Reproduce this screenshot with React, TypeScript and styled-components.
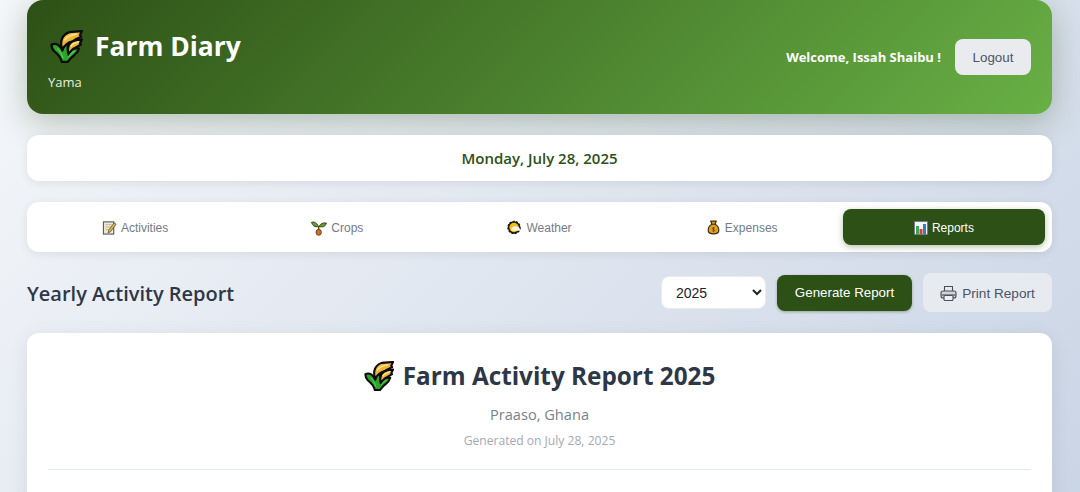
import React from "react";
import styled, { createGlobalStyle } from "styled-components";

const GlobalStyle = createGlobalStyle`
  html, body {
    margin: 0;
    padding: 0;
    height: 100%;
    overflow: hidden;
  }
  body {
    background: linear-gradient(135deg, #f5f7fa 0%, #c3cfe2 100%) no-repeat;
    background-size: 1080px 760px;
    background-color: #c3cfe2;
    font-family: "Open Sans", "Noto Sans", sans-serif;
  }
  #root {
    height: 492px;
    overflow: hidden;
  }
`;

const Page = styled.div`
  height: 492px;
  box-sizing: border-box;
  padding: 0 28px 0 27px;
  display: flex;
  flex-direction: column;
`;

const Header = styled.header`
  height: 114px;
  flex: none;
  box-sizing: border-box;
  padding: 0 21px;
  border-radius: 16px;
  background: linear-gradient(135deg, #2d5016 0%, #68b045 100%);
  box-shadow: 0 8px 32px rgba(45, 80, 22, 0.3);
  display: flex;
  align-items: center;
  justify-content: space-between;
  color: #fff;
`;

const Brand = styled.div`
  display: flex;
  flex-direction: column;
  gap: 9px;
  padding-top: 5px;
`;

const BrandTitle = styled.h1`
  margin: 0;
  display: flex;
  align-items: center;
  gap: 12px;
  font-size: 26.4px;
  line-height: 36px;
  font-weight: 700;
  padding-left: 2px;
`;

const BrandPlace = styled.div`
  font-size: 13px;
  line-height: 18px;
  font-weight: 500;
  color: #e6ede1;
`;

const UserArea = styled.div`
  display: flex;
  align-items: center;
  gap: 14px;
`;

const Welcome = styled.span`
  font-size: 13px;
  font-weight: 700;
`;

const LogoutButton = styled.button`
  width: 76px;
  height: 36px;
  border: 0;
  border-radius: 8px;
  background: #e9ebef;
  color: #4a5568;
  font-family: "Liberation Sans", Arial, sans-serif;
  font-size: 13.33px;
  padding: 0;
`;

const DateCard = styled.div`
  margin-top: 21px;
  height: 46px;
  flex: none;
  border-radius: 12px;
  background: #fff;
  box-shadow: 0 2px 10px rgba(0, 0, 0, 0.08);
  display: flex;
  align-items: center;
  justify-content: center;
  color: #2d5016;
  font-size: 15px;
  font-weight: 600;
`;

const Tabs = styled.nav`
  margin-top: 21px;
  height: 50px;
  flex: none;
  box-sizing: border-box;
  padding: 7px;
  border-radius: 12px;
  background: #fff;
  box-shadow: 0 2px 10px rgba(0, 0, 0, 0.08);
  display: flex;
`;

const Tab = styled.button<{ $active?: boolean }>`
  flex: 1;
  height: 36px;
  border: 0;
  padding: 1px 0 0;
  border-radius: 8px;
  display: flex;
  align-items: center;
  justify-content: center;
  gap: 4px;
  background: ${(p) => (p.$active ? "#2d5016" : "transparent")};
  color: ${(p) => (p.$active ? "#fff" : "#747a86")};
  box-shadow: ${(p) => (p.$active ? "0 2px 6px rgba(45, 80, 22, 0.35)" : "none")};
  font-family: "Liberation Sans", Arial, sans-serif;
  font-size: 12px;
`;

const Toolbar = styled.div`
  margin-top: 20px;
  height: 41px;
  flex: none;
  display: flex;
  align-items: center;
  justify-content: space-between;
`;

const SectionTitle = styled.h2`
  margin: 2px 0 0;
  font-size: 20px;
  font-weight: 600;
  color: #2d3748;
`;

const Controls = styled.div`
  display: flex;
  align-items: center;
  gap: 11px;
`;

const YearSelect = styled.select`
  width: 105px;
  height: 33px;
  box-sizing: border-box;
  border: 1px solid #e8ecf1;
  border-radius: 8px;
  background: #fff;
  color: #222;
  font-family: "Liberation Sans", Arial, sans-serif;
  font-size: 14px;
  padding: 0 0 0 10px;
`;

const PrimaryButton = styled.button`
  width: 135px;
  height: 36px;
  border: 0;
  border-radius: 8px;
  background: #2d5016;
  color: #fff;
  box-shadow: 0 1px 3px rgba(45, 80, 22, 0.4);
  font-family: "Liberation Sans", Arial, sans-serif;
  font-size: 13.33px;
  padding: 0;
`;

const SecondaryButton = styled.button`
  width: 129px;
  height: 39px;
  border: 0;
  border-radius: 8px;
  background: #e7eaef;
  color: #4a5568;
  display: flex;
  align-items: center;
  justify-content: center;
  gap: 5px;
  font-family: "Liberation Sans", Arial, sans-serif;
  font-size: 13.6px;
  padding: 1px 0 0;
`;

const ReportCard = styled.section`
  margin-top: 20px;
  flex: none;
  height: 300px;
  box-sizing: border-box;
  padding: 22px 21px 0;
  border-radius: 12px;
  background: #fff;
  box-shadow: 0 4px 20px rgba(0, 0, 0, 0.08);
`;

const ReportHeader = styled.div`
  display: flex;
  flex-direction: column;
  align-items: center;
  padding-bottom: 20px;
  border-bottom: 1px solid #e2e8f0;
`;

const ReportTitle = styled.h3`
  margin: 0;
  display: flex;
  align-items: center;
  gap: 9px;
  font-size: 24.3px;
  line-height: 42px;
  font-weight: 700;
  color: #2d3748;
`;

const ReportPlace = styled.div`
  margin-top: 7px;
  font-size: 14.6px;
  line-height: 20px;
  color: #7a818c;
`;

const ReportDate = styled.div`
  margin-top: 8px;
  font-size: 12.1px;
  line-height: 17px;
  color: #a3a9b3;
`;

const SheafIcon = ({ size }: { size: number }) => (
  <svg width={size} height={size} viewBox="0 0 32 32" aria-hidden="true">
    <g stroke="#0b0b0b" strokeWidth="2.2" strokeLinejoin="round" strokeLinecap="round">
      <path
        d="M1.500 14c4.500-2 8.500 1 10.500 6l1-6h4l.5 8c1.500-3 5.500-4.500 10.500-4-1 4.500-5 6.500-7 8.500-2 2-3 3.500-4 4.500h-5.500c-1-5-5-8.500-7.500-10.500-2-2-2.500-4.500-2.500-6.500z"
        fill="#2ea32a"
      />
      <path
        d="M12 19C9 11 12 4 19 2l12-1-2 4 1 1.500-5 2.500-3 2c-5 1-8 4-10 8z"
        fill="#f1b733"
      />
      <path
        d="M18 24c-2-8 1-13 7-14l6-1-2 4 1 1-5 3c-3 1-5 3-7 7z"
        fill="#f1b733"
      />
    </g>
    <path d="M14 10c2-3 6-5.500 12-6M20 16c1.500-2.500 4-3.500 8-4.500" stroke="#fae29a" strokeWidth="1.500" fill="none" />
    <path d="M7 18c2.500 2 4.500 5.500 5.500 9.500M24 20.500c-2 1-4.500 3-6 5.500" stroke="#58c653" strokeWidth="1.300" fill="none" />
  </svg>
);

const MemoIcon = () => (
  <svg width="15" height="15" viewBox="0 0 16 16" aria-hidden="true">
    <rect x="1.500" y="2" width="11" height="13" fill="#efe8d4" stroke="#5b5b5b" strokeWidth="1.200" />
    <path d="M3.500 5h7M3.500 7.500h6M3.500 10h4" stroke="#c9b98e" strokeWidth="1" />
    <path d="M7 11l6-8 2 1.500-6 8-2.500 1z" fill="#e7b93f" stroke="#444" strokeWidth="0.800" />
  </svg>
);

const SeedlingIcon = () => (
  <svg width="16" height="16" viewBox="0 0 16 16" aria-hidden="true">
    <path d="M7.500 6.500C6 3 3.500 1.500.6 2.200 1 5.500 4 7.500 7.500 6.500z" fill="#6b9a2e" stroke="#2c3d12" strokeWidth="0.900" />
    <path d="M8 6.500c1.500-3 4-4 7.400-3.500-.6 3.200-3.700 4.700-7.400 3.500z" fill="#6b9a2e" stroke="#2c3d12" strokeWidth="0.900" />
    <path d="M7.700 6.500v4" stroke="#3d5a1a" strokeWidth="1.400" />
    <ellipse cx="7.700" cy="12.300" rx="2.700" ry="3" fill="#c8702c" stroke="#5f3312" strokeWidth="0.800" />
  </svg>
);

const SunIcon = () => (
  <svg width="15" height="15" viewBox="0 0 16 16" aria-hidden="true">
    <circle cx="7.500" cy="8" r="6.600" fill="#1c1605" strokeDasharray="2.200 1.400" stroke="#1c1605" strokeWidth="1.200" />
    <circle cx="7.500" cy="8" r="5" fill="#f2bd1d" />
    <path d="M4.500 10c0-2 2.500-3.700 4.500-3.200 1.500-.5 4 .5 4.500 2.200.8.500.8 2.500-1 2.500H6C5 11.500 4.500 11 4.500 10z" fill="#fdf6dc" />
  </svg>
);

const BagIcon = () => (
  <svg width="15" height="15" viewBox="0 0 16 16" aria-hidden="true">
    <path d="M5 1.200h6L9.700 4.500c2.600 1.500 4 4 4 6.300 0 2.800-2.500 4-5.700 4s-5.700-1.200-5.700-4c0-2.300 1.400-4.800 4-6.300z" fill="#e0a020" stroke="#3a2a08" strokeWidth="1.200" strokeLinejoin="round" />
    <path d="M6 4.500h4" stroke="#3a2a08" strokeWidth="1" />
    <path d="M8 7.500v5M9.300 8.500c-1-.6-2.500-.3-2.500.6 0 1.300 2.500.7 2.500 2 0 .9-1.500 1.200-2.600.5" stroke="#5a3f0a" strokeWidth="0.800" fill="none" />
  </svg>
);

const ChartIcon = () => (
  <svg width="14" height="14" viewBox="0 0 14 14" aria-hidden="true">
    <rect x="0.500" y="0.500" width="13" height="13" fill="#f3f5f7" stroke="#6b7480" strokeWidth="0.800" />
    <rect x="2" y="5" width="3" height="8" fill="#3aa655" />
    <rect x="5.500" y="8" width="3" height="5" fill="#d8402f" />
    <rect x="9" y="3" width="3" height="10" fill="#2f7fc4" />
  </svg>
);

const PrinterIcon = () => (
  <svg width="17" height="17" viewBox="0 0 17 17" fill="none" stroke="#4a4f57" strokeWidth="1.100" aria-hidden="true">
    <path d="M4.500 6V1.500h8V6" />
    <rect x="1" y="6" width="15" height="7" rx="2" fill="#cfd3d8" />
    <path d="M1.500 10h14" />
    <rect x="4" y="10.500" width="9" height="5" rx="1" fill="#eef0f3" />
  </svg>
);

const tabs = [
  { label: "Activities", icon: <MemoIcon /> },
  { label: "Crops", icon: <SeedlingIcon /> },
  { label: "Weather", icon: <SunIcon /> },
  { label: "Expenses", icon: <BagIcon /> },
  { label: "Reports", icon: <ChartIcon />, active: true },
];

export default function App() {
  return (
    <>
      <GlobalStyle />
      <Page>
        <Header>
          <Brand>
            <BrandTitle>
              <SheafIcon size={33} />
              Farm Diary
            </BrandTitle>
            <BrandPlace>Yama</BrandPlace>
          </Brand>
          <UserArea>
            <Welcome>Welcome, Issah Shaibu !</Welcome>
            <LogoutButton>Logout</LogoutButton>
          </UserArea>
        </Header>
        <DateCard>Monday, July 28, 2025</DateCard>
        <Tabs>
          {tabs.map((tab) => (
            <Tab key={tab.label} $active={tab.active}>
              {tab.icon}
              {tab.label}
            </Tab>
          ))}
        </Tabs>
        <Toolbar>
          <SectionTitle>Yearly Activity Report</SectionTitle>
          <Controls>
            <YearSelect defaultValue="2025">
              <option>2025</option>
              <option>2024</option>
            </YearSelect>
            <PrimaryButton>Generate Report</PrimaryButton>
            <SecondaryButton>
              <PrinterIcon />
              Print Report
            </SecondaryButton>
          </Controls>
        </Toolbar>
        <ReportCard>
          <ReportHeader>
            <ReportTitle>
              <SheafIcon size={30} />
              Farm Activity Report 2025
            </ReportTitle>
            <ReportPlace>Praaso, Ghana</ReportPlace>
            <ReportDate>Generated on July 28, 2025</ReportDate>
          </ReportHeader>
        </ReportCard>
      </Page>
    </>
  );
}
